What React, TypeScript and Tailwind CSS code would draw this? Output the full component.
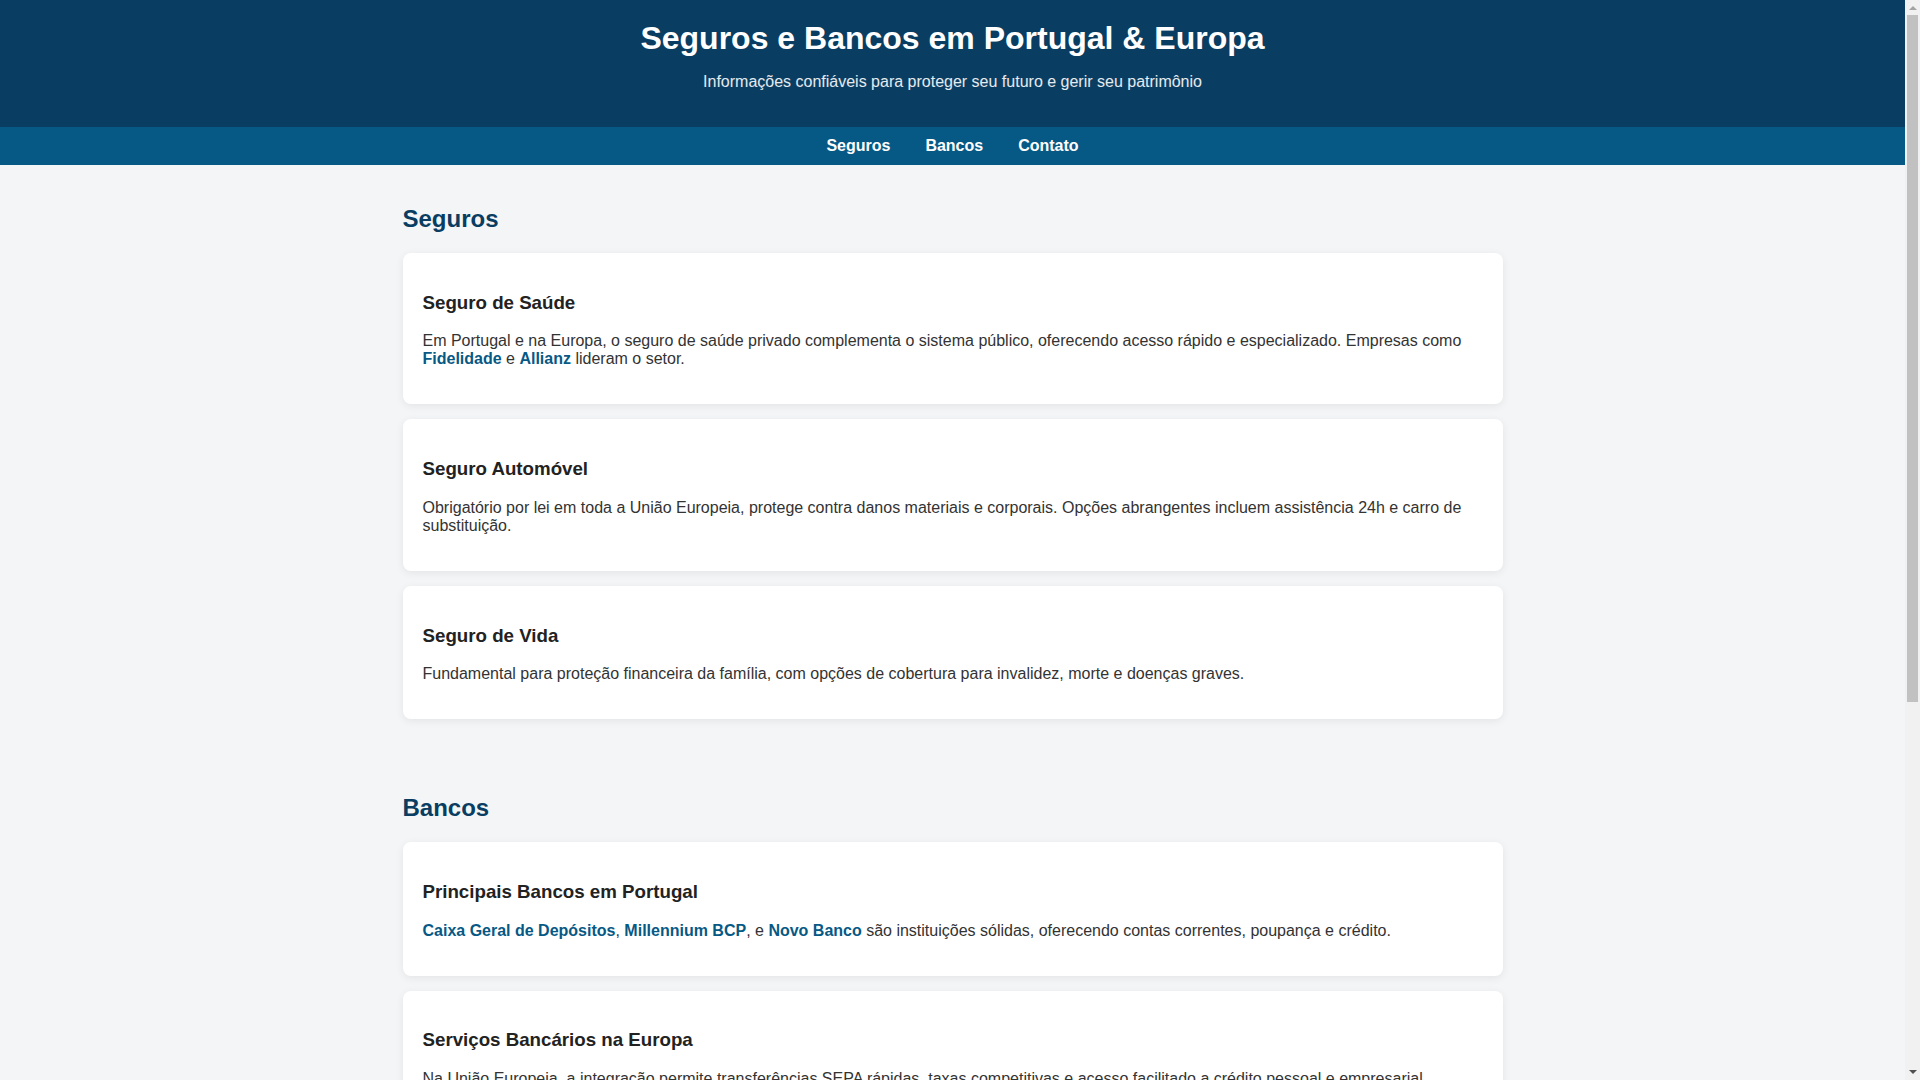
import React from "react";

function Card({ title, children }: { title: string; children: React.ReactNode }) {
  return (
    <div className="bg-white rounded-[8px] p-[20px] mb-[15px] shadow-[0_2px_8px_rgba(0,0,0,0.07)]">
      <h3 className="text-[18.72px] font-bold text-[#222] my-[18.72px]">{title}</h3>
      <p className="text-[16px] my-[16px]">{children}</p>
    </div>
  );
}

function L({ children }: { children: React.ReactNode }) {
  return <a href="#" className="font-bold text-[#075985] no-underline">{children}</a>;
}

function FakeScrollbar() {
  return (
    <div className="fixed top-0 right-0 w-[15px] h-screen bg-[#f1f1f1] flex flex-col items-center">
      <div className="h-[15px] w-full flex items-center justify-center">
        <svg width="8" height="5" viewBox="0 0 8 5">
          <polygon points="0,5 4,1 8,5" fill="#a3a3a3" />
        </svg>
      </div>
      <div className="w-[11px] h-[687px] bg-[#c1c1c1]" />
      <div className="flex-1" />
      <div className="h-[15px] w-full flex items-center justify-center">
        <svg width="8" height="5" viewBox="0 0 8 5">
          <polygon points="0,0 8,0 4,4" fill="#505050" />
        </svg>
      </div>
    </div>
  );
}

export default function App() {
  return (
    <div className="min-h-screen bg-[#f4f5f7] text-[#333] leading-[normal] font-['Liberation_Sans',Arial,sans-serif]">
      <div className="mr-[15px]">
        <header className="bg-[#0a3d62] text-white text-center p-[20px]">
          <h1 className="text-[32px] font-bold m-0">Seguros e Bancos em Portugal &amp; Europa</h1>
          <p className="text-[16px] my-[16px] text-white/90">
            Informações confiáveis para proteger seu futuro e gerir seu patrimônio
          </p>
        </header>
        <nav className="bg-[#075985] flex justify-center gap-[35px] py-[10px]">
          <a href="#seguros" className="text-white font-bold text-[16px]">Seguros</a>
          <a href="#bancos" className="text-white font-bold text-[16px]">Bancos</a>
          <a href="#contato" className="text-white font-bold text-[16px]">Contato</a>
        </nav>
        <main className="max-w-[1100px] mx-auto">
          <section id="seguros" className="py-[20px]">
            <h2 className="text-[24px] font-bold text-[#0a3d62] my-[20px]">Seguros</h2>
            <Card title="Seguro de Saúde">
              Em Portugal e na Europa, o seguro de saúde privado complementa o sistema público, oferecendo acesso rápido e
              especializado. Empresas como <L>Fidelidade</L> e <L>Allianz</L> lideram o setor.
            </Card>
            <Card title="Seguro Automóvel">
              Obrigatório por lei em toda a União Europeia, protege contra danos materiais e corporais. Opções abrangentes
              incluem assistência 24h e carro de substituição.
            </Card>
            <Card title="Seguro de Vida">
              Fundamental para proteção financeira da família, com opções de cobertura para invalidez, morte e doenças graves.
            </Card>
          </section>
          <section id="bancos" className="py-[20px]">
            <h2 className="text-[24px] font-bold text-[#0a3d62] my-[20px]">Bancos</h2>
            <Card title="Principais Bancos em Portugal">
              <L>Caixa Geral de Depósitos</L>, <L>Millennium BCP</L>, e <L>Novo Banco</L> são instituições sólidas,
              oferecendo contas correntes, poupança e crédito.
            </Card>
            <Card title="Serviços Bancários na Europa">
              Na União Europeia, a integração permite transferências SEPA rápidas, taxas competitivas e acesso facilitado a
              crédito pessoal e empresarial.
            </Card>
          </section>
        </main>
      </div>
      <FakeScrollbar />
    </div>
  );
}
